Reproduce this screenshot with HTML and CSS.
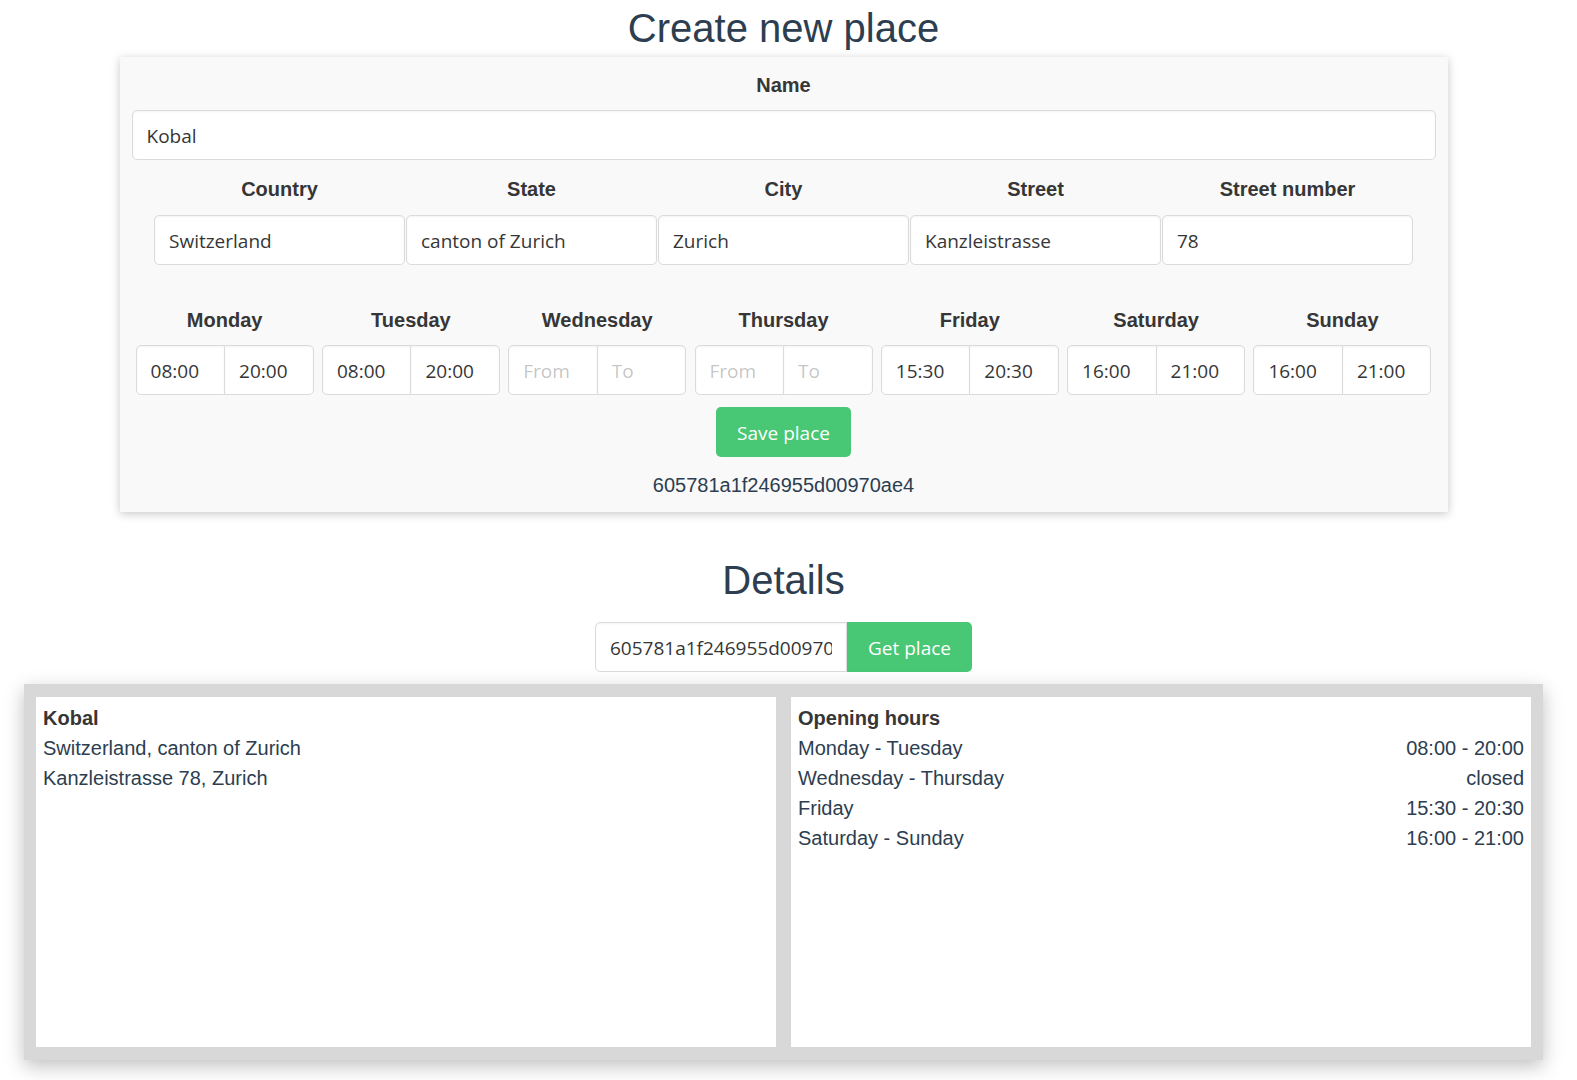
FILE: index.html
```html
<!DOCTYPE html>
<html lang="en">
<head>
<meta charset="utf-8">
<title>Create new place</title>
<link rel="stylesheet" href="styles.css">
</head>
<body>
<div class="page">
  <h1 class="title">Create new place</h1>
  <section class="card">
    <div class="label">Name</div>
    <input class="input" type="text" value="Kobal">

    <div class="addr-grid">
      <div class="field"><div class="label">Country</div><input class="input" type="text" value="Switzerland"></div>
      <div class="field"><div class="label">State</div><input class="input" type="text" value="canton of Zurich"></div>
      <div class="field"><div class="label">City</div><input class="input" type="text" value="Zurich"></div>
      <div class="field"><div class="label">Street</div><input class="input" type="text" value="Kanzleistrasse"></div>
      <div class="field"><div class="label">Street number</div><input class="input" type="text" value="78"></div>
    </div>

    <div class="days-grid">
      <div class="field"><div class="label">Monday</div><div class="addons"><input class="input" type="text" value="08:00" placeholder="From"><input class="input" type="text" value="20:00" placeholder="To"></div></div>
      <div class="field"><div class="label">Tuesday</div><div class="addons"><input class="input" type="text" value="08:00" placeholder="From"><input class="input" type="text" value="20:00" placeholder="To"></div></div>
      <div class="field"><div class="label">Wednesday</div><div class="addons"><input class="input" type="text" placeholder="From"><input class="input" type="text" placeholder="To"></div></div>
      <div class="field"><div class="label">Thursday</div><div class="addons"><input class="input" type="text" placeholder="From"><input class="input" type="text" placeholder="To"></div></div>
      <div class="field"><div class="label">Friday</div><div class="addons"><input class="input" type="text" value="15:30" placeholder="From"><input class="input" type="text" value="20:30" placeholder="To"></div></div>
      <div class="field"><div class="label">Saturday</div><div class="addons"><input class="input" type="text" value="16:00" placeholder="From"><input class="input" type="text" value="21:00" placeholder="To"></div></div>
      <div class="field"><div class="label">Sunday</div><div class="addons"><input class="input" type="text" value="16:00" placeholder="From"><input class="input" type="text" value="21:00" placeholder="To"></div></div>
    </div>

    <div class="actions"><button class="btn" type="button">Save place</button></div>
    <div class="hash">605781a1f246955d00970ae4</div>
  </section>

  <h1 class="title details-title">Details</h1>
  <div class="get-row">
    <input class="input get-input" type="text" value="605781a1f246955d00970ae4">
    <button class="btn btn-attached" type="button">Get place</button>
  </div>

  <div class="details-box">
    <div class="panel">
      <div class="strong">Kobal</div>
      <div>Switzerland, canton of Zurich</div>
      <div>Kanzleistrasse 78, Zurich</div>
    </div>
    <div class="panel">
      <div class="strong">Opening hours</div>
      <div class="hours-row"><span>Monday - Tuesday</span><span>08:00 - 20:00</span></div>
      <div class="hours-row"><span>Wednesday - Thursday</span><span>closed</span></div>
      <div class="hours-row"><span>Friday</span><span>15:30 - 20:30</span></div>
      <div class="hours-row"><span>Saturday - Sunday</span><span>16:00 - 21:00</span></div>
    </div>
  </div>
</div>
</body>
</html>
```

FILE: styles.css
```css
html, body {
  margin: 0;
  padding: 0;
  background: #ffffff;
}

body {
  font-family: "Liberation Sans", Arial, sans-serif;
  font-size: 20px;
  line-height: 30px;
  color: #2c3e50;
}

.page {
  width: 1567px;
  padding-top: 4px;
  padding-bottom: 20px;
  display: flex;
  flex-direction: column;
  align-items: center;
}

.title {
  margin: 0;
  font-size: 40px;
  line-height: 48px;
  font-weight: 400;
  color: #2c3e50;
  text-align: center;
}

.card {
  margin-top: 5px;
  width: 1328px;
  box-sizing: border-box;
  padding: 13px 12px 12px;
  background: #f9f9f9;
  box-shadow: 0 2px 9px rgba(0, 0, 0, 0.22);
  display: flex;
  flex-direction: column;
}

.label {
  font-weight: 700;
  color: #363636;
  text-align: center;
  line-height: 30px;
}

.card > .label {
  margin-bottom: 10px;
}

.input {
  display: block;
  box-sizing: border-box;
  width: 100%;
  height: 50px;
  margin: 0;
  padding: 10px 14px 8px;
  border: 1px solid #dbdbdb;
  border-radius: 5px;
  background: #ffffff;
  box-shadow: inset 0 1px 2px rgba(10, 10, 10, 0.05);
  font-family: "Open Sans", "Noto Sans", sans-serif;
  font-size: 19px;
  line-height: 30px;
  color: #363636;
  outline: none;
}

.input::placeholder {
  color: rgba(54, 54, 54, 0.3);
}

.addr-grid {
  margin-top: 14px;
  align-self: center;
  display: grid;
  grid-template-columns: repeat(5, 251px);
  column-gap: 1px;
}

.addr-grid .label {
  margin-bottom: 11px;
}

.days-grid {
  margin-top: 40px;
  align-self: center;
  display: grid;
  grid-template-columns: repeat(7, 178px);
  column-gap: 8.3px;
}

.days-grid .label {
  margin-bottom: 10px;
}

.addons {
  display: flex;
}

.addons .input {
  flex: 1 1 0;
  min-width: 0;
}

.addons .input:first-child {
  border-top-right-radius: 0;
  border-bottom-right-radius: 0;
  margin-right: -1px;
}

.addons .input:last-child {
  border-top-left-radius: 0;
  border-bottom-left-radius: 0;
}

.actions {
  margin-top: 12px;
  display: flex;
  justify-content: center;
}

.btn {
  box-sizing: border-box;
  height: 50px;
  padding: 10px 20px 8px;
  border: 1px solid transparent;
  border-radius: 5px;
  background: #48c774;
  color: #ffffff;
  font-family: "Open Sans", "Noto Sans", sans-serif;
  font-size: 19px;
  line-height: 30px;
  cursor: pointer;
}

.hash {
  margin-top: 13px;
  text-align: center;
  line-height: 30px;
}

.details-title {
  margin-top: 44px;
}

.get-row {
  margin-top: 18px;
  display: flex;
}

.get-input {
  width: 252px;
  border-top-right-radius: 0;
  border-bottom-right-radius: 0;
}

.btn-attached {
  width: 125px;
  border-top-left-radius: 0;
  border-bottom-left-radius: 0;
}

.details-box {
  margin-top: 12px;
  width: 1519px;
  box-sizing: border-box;
  padding: 13px 12px;
  background: #d8d8d8;
  box-shadow: 0 6px 18px rgba(0, 0, 0, 0.25);
  display: grid;
  grid-template-columns: 1fr 1fr;
  column-gap: 15px;
}

.panel {
  height: 350px;
  box-sizing: border-box;
  padding: 6px 7px;
  background: #ffffff;
  line-height: 30px;
}

.strong {
  font-weight: 700;
  color: #363636;
}

.hours-row {
  display: flex;
  justify-content: space-between;
}
```
